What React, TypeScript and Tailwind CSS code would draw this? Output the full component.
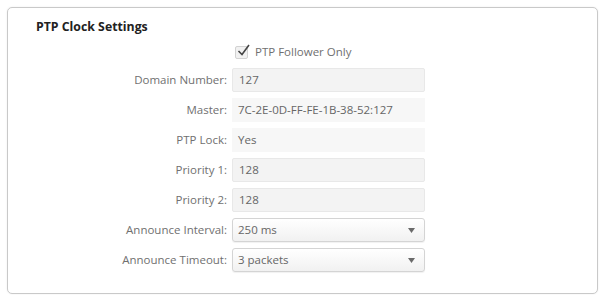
const font = { fontFamily: '"Open Sans", "Noto Sans", sans-serif' };

type Field = { label: string; value: string; kind: "input" | "static" | "select" };

const fields: Field[] = [
  { label: "Domain Number:", value: "127", kind: "input" },
  { label: "Master:", value: "7C-2E-0D-FF-FE-1B-38-52:127", kind: "static" },
  { label: "PTP Lock:", value: "Yes", kind: "static" },
  { label: "Priority 1:", value: "128", kind: "input" },
  { label: "Priority 2:", value: "128", kind: "input" },
  { label: "Announce Interval:", value: "250 ms", kind: "select" },
  { label: "Announce Timeout:", value: "3 packets", kind: "select" },
];

function FieldBox({ field }: { field: Field }) {
  if (field.kind === "select") {
    return (
      <div className="w-[193px] h-[24px] flex items-center justify-between pl-[5px] pr-[9px] rounded-[3px] border border-[#d4d4d4] bg-gradient-to-b from-white to-[#f1f1f1] shadow-[0_1px_1px_rgba(0,0,0,0.06)] text-[#666]">
        <span>{field.value}</span>
        <svg width="7" height="5" viewBox="0 0 7 5">
          <path d="M0 0 L7 0 L3.5 5 Z" fill="#6a6a6a" />
        </svg>
      </div>
    );
  }
  if (field.kind === "static") {
    return (
      <div className="w-[193px] h-[24px] flex items-center pl-[6px] bg-[#f7f7f7] text-[#666]">
        {field.value}
      </div>
    );
  }
  return (
    <div className="w-[193px] h-[24px] flex items-center pl-[6px] rounded-[2px] border border-[#e8e8e8] bg-[#f3f3f3] text-[#666]">
      {field.value}
    </div>
  );
}

export default function App() {
  return (
    <div className="w-[600px] h-[295px] bg-white pt-[7px] pl-[7px]" style={font}>
      <div className="w-[591px] h-[287px] rounded-[5px] border border-[#c9c9c9] bg-white shadow-[0_0_2px_rgba(0,0,0,0.08)]">
        <h1 className="pt-[11px] pl-[28px] text-[12.3px] leading-[16px] font-bold text-[#222]">
          PTP Clock Settings
        </h1>

        <div className="mt-[9px] h-[16px] flex items-center pl-[227px] text-[11.5px] text-[#707070]">
          <div className="relative w-[13px] h-[13px] rounded-[2px] border border-[#d2d2d2] bg-[#f1f1f1]">
            <svg className="absolute -top-[3px] left-[1px]" width="13" height="13" viewBox="0 0 13 13">
              <path d="M1.5 7 L5 10.5 L12 1" stroke="#444" strokeWidth="1.6" fill="none" />
            </svg>
          </div>
          <span className="ml-[7px]">PTP Follower Only</span>
        </div>

        <div className="mt-[8px] flex flex-col gap-[6px] text-[11.5px]">
          {fields.map((f) => (
            <div key={f.label} className="flex items-center h-[24px]">
              <span className="w-[219px] text-right text-[#707070]">{f.label}</span>
              <div className="ml-[5px]">
                <FieldBox field={f} />
              </div>
            </div>
          ))}
        </div>
      </div>
    </div>
  );
}
